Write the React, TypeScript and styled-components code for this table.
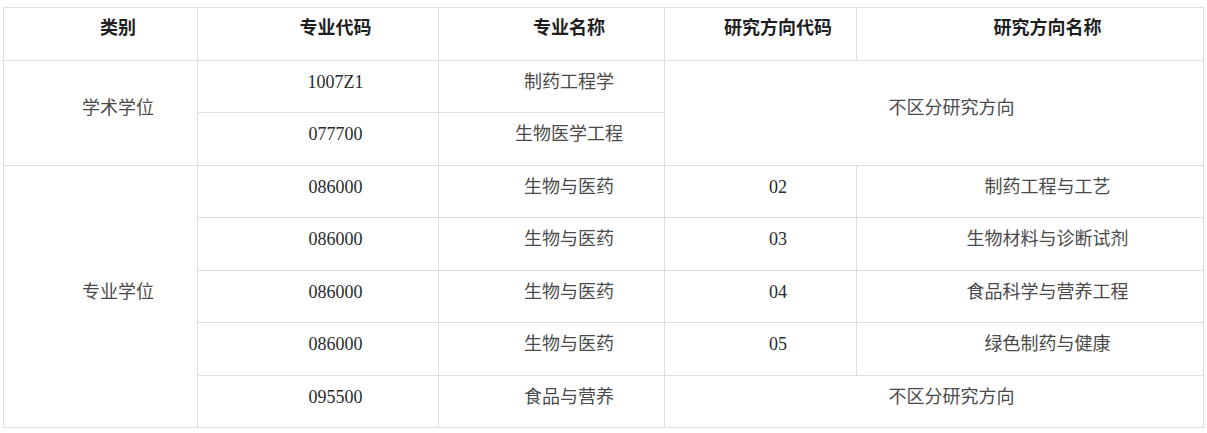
import React from "react";
import styled, { createGlobalStyle } from "styled-components";

const GlobalStyle = createGlobalStyle`
  html, body { margin: 0; padding: 0; background: #ffffff; }
  body { font-family: "Liberation Serif", "Noto Sans CJK SC", serif; }
`;

const Page = styled.div`
  padding: 7px 0 0 3px;
`;

const Table = styled.table`
  border-collapse: collapse;
  table-layout: fixed;
  width: 1200px;
  font-family: "Liberation Serif", "Noto Sans CJK SC", serif;
  font-size: 18px;
  line-height: 24px;
`;

const Row = styled.tr<{ $h: number }>`
  height: ${(p) => p.$h}px;
`;

const HeadCell = styled.th`
  border: 1px solid #dddddd;
  padding: 0 0 12px 35px;
  text-align: center;
  vertical-align: middle;
  font-weight: 700;
  color: #1f1f1f;
`;

const Cell = styled.td<{ $muted?: boolean }>`
  border: 1px solid #dddddd;
  padding: 0 0 10px 35px;
  text-align: center;
  vertical-align: middle;
  font-weight: 400;
  color: ${(p) => (p.$muted ? "#4a4a4a" : "#2a2a2a")};
`;

const cols = [194, 241, 226, 192, 347];

export default function App() {
  return (
    <Page>
      <GlobalStyle />
      <Table>
        <colgroup>
          {cols.map((w, i) => (
            <col key={i} style={{ width: w }} />
          ))}
        </colgroup>
        <thead>
          <Row $h={53}>
            <HeadCell>类别</HeadCell>
            <HeadCell>专业代码</HeadCell>
            <HeadCell>专业名称</HeadCell>
            <HeadCell>研究方向代码</HeadCell>
            <HeadCell>研究方向名称</HeadCell>
          </Row>
        </thead>
        <tbody>
          <Row $h={52}>
            <Cell rowSpan={2} $muted>学术学位</Cell>
            <Cell>1007Z1</Cell>
            <Cell $muted>制药工程学</Cell>
            <Cell colSpan={2} rowSpan={2} $muted>不区分研究方向</Cell>
          </Row>
          <Row $h={53}>
            <Cell>077700</Cell>
            <Cell $muted>生物医学工程</Cell>
          </Row>
          <Row $h={52}>
            <Cell rowSpan={5} $muted>专业学位</Cell>
            <Cell>086000</Cell>
            <Cell $muted>生物与医药</Cell>
            <Cell>02</Cell>
            <Cell $muted>制药工程与工艺</Cell>
          </Row>
          <Row $h={53}>
            <Cell>086000</Cell>
            <Cell $muted>生物与医药</Cell>
            <Cell>03</Cell>
            <Cell $muted>生物材料与诊断试剂</Cell>
          </Row>
          <Row $h={52}>
            <Cell>086000</Cell>
            <Cell $muted>生物与医药</Cell>
            <Cell>04</Cell>
            <Cell $muted>食品科学与营养工程</Cell>
          </Row>
          <Row $h={53}>
            <Cell>086000</Cell>
            <Cell $muted>生物与医药</Cell>
            <Cell>05</Cell>
            <Cell $muted>绿色制药与健康</Cell>
          </Row>
          <Row $h={52}>
            <Cell>095500</Cell>
            <Cell $muted>食品与营养</Cell>
            <Cell colSpan={2} $muted>不区分研究方向</Cell>
          </Row>
        </tbody>
      </Table>
    </Page>
  );
}
